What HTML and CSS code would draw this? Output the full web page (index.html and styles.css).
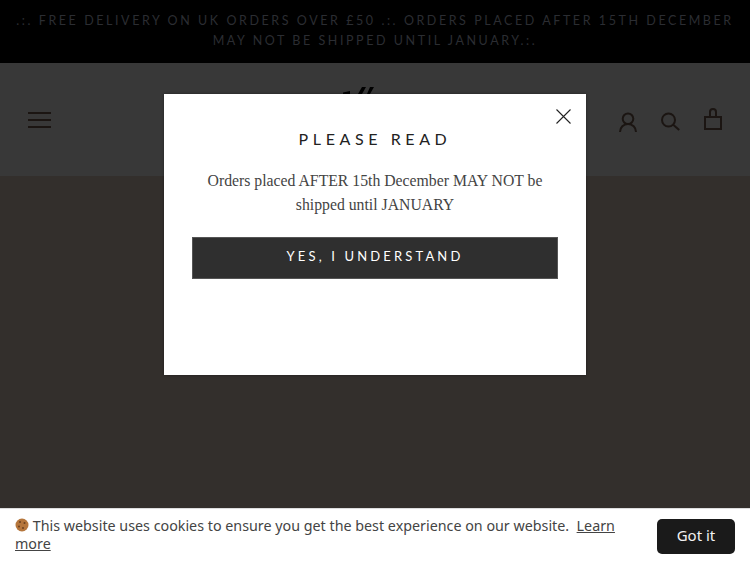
FILE: index.html
```html
<!DOCTYPE html>
<html>
<head>
    <title>Please read</title>
    <link rel="stylesheet" href="styles.css">
</head>
<body>
    <div class="announcement">.:. FREE DELIVERY ON UK ORDERS OVER £50 .:. ORDERS PLACED AFTER 15TH DECEMBER MAY NOT BE SHIPPED UNTIL JANUARY.:.</div>

    <header class="header">
        <svg width="24" height="18" viewBox="0 0 24 18" fill="none" stroke="#1b1512" stroke-width="2">
            <path d="M0 2h23M0 9h23M0 16h23"/>
        </svg>
        <svg class="logo" width="40" height="8" viewBox="0 0 40 8" fill="#000">
            <path d="M7 5.500l7-1.500v3H7zM22 7L26 0h4l-4 7zM31 7L34 0h4l-4 7z"/>
        </svg>
        <div class="header-icons">
            <svg width="18" height="24" viewBox="0 0 18 24" fill="none" stroke="#1b1512" stroke-width="2">
                <circle cx="9" cy="10.800" r="5.300"/>
                <path d="M1 24c0-4.500 3.500-8 8-8s8 3.500 8 8"/>
            </svg>
            <svg width="19" height="24" viewBox="0 0 19 24" fill="none" stroke="#1b1512" stroke-width="2">
                <circle cx="7.500" cy="12" r="6.500"/>
                <path d="M12.200 16.700l6 5.300"/>
            </svg>
            <svg width="18" height="24" viewBox="0 0 18 24" fill="none" stroke="#1b1512" stroke-width="2">
                <path d="M1 9h16v12H1zM6 9V4a3 3 0 0 1 6 0v5"/>
            </svg>
        </div>
    </header>

    <main class="hero">
        <div class="modal">
            <svg class="modal-close" width="15" height="15" viewBox="0 0 15 15" fill="none" stroke="#222" stroke-width="1.100">
                <path d="M.5.500l14 14M14.500.500l-14 14"/>
            </svg>
            <h2 class="modal-title">PLEASE READ</h2>
            <p class="modal-text">Orders placed AFTER 15th December MAY NOT be shipped until JANUARY</p>
            <button type="button" class="modal-button">YES, I UNDERSTAND</button>
        </div>
    </main>

    <div class="cookie-bar">
        <p class="cookie-text">
            <svg class="cookie-icon" width="14" height="14" viewBox="0 0 14 14">
                <circle cx="7" cy="7" r="6.500" fill="#b5763c"/>
                <circle cx="5" cy="4" r="1" fill="#6b4020"/>
                <circle cx="9.500" cy="5" r="1" fill="#6b4020"/>
                <circle cx="4" cy="8.500" r="1" fill="#6b4020"/>
                <circle cx="8" cy="10" r="1" fill="#6b4020"/>
            </svg>
            This website uses cookies to ensure you get the best experience on our website.&nbsp; <a href="#">Learn more</a>
        </p>
        <button type="button" class="cookie-button">Got it</button>
    </div>
</body>
</html>
```

FILE: styles.css
```css
html, body {
    height: 100%;
}
body {
    display: flex;
    flex-direction: column;
    height: 563px;
    margin: 0;
    overflow: hidden;
    background-color: #332f2c;
    font-family: "Liberation Serif", serif;
}
.announcement {
    box-sizing: border-box;
    height: 63px;
    padding: 11px 8px 0;
    background-color: #000;
    color: #2b2d32;
    font-family: Lato, sans-serif;
    font-size: 12.500px;
    line-height: 20px;
    letter-spacing: 2.570px;
    text-align: center;
}
.header {
    display: flex;
    align-items: center;
    justify-content: space-between;
    box-sizing: border-box;
    height: 113px;
    padding: 1px 28px 0;
    background-color: #383838;
    position: relative;
}
.logo {
    position: absolute;
    left: 336px;
    top: 24px;
}
.header-icons {
    display: flex;
    align-items: center;
    gap: 24px;
}
.hero {
    flex: 1;
    position: relative;
}
.modal {
    position: absolute;
    left: 164px;
    top: -82px;
    box-sizing: border-box;
    width: 422px;
    height: 281px;
    padding: 34px 28px 0;
    background-color: #fff;
    box-shadow: 0 0 3px rgba(0, 0, 0, 0.4);
    text-align: center;
}
.modal-close {
    position: absolute;
    top: 15px;
    right: 15px;
}
.modal-title {
    margin: 0;
    color: #222;
    font-family: Lato, sans-serif;
    font-size: 16px;
    font-weight: normal;
    line-height: 22px;
    letter-spacing: 4.600px;
}
.modal-text {
    margin: 19px 0 0;
    color: #444;
    font-size: 15.750px;
    line-height: 24px;
}
.modal-button {
    display: block;
    width: 366px;
    height: 42px;
    margin-top: 20px;
    padding-bottom: 5px;
    border: 1px solid #555;
    background-color: #2f2f2f;
    color: #fff;
    font-family: Lato, sans-serif;
    font-size: 13px;
    letter-spacing: 3.150px;
}
.cookie-bar {
    display: flex;
    align-items: center;
    justify-content: space-between;
    gap: 30px;
    box-sizing: border-box;
    height: 55px;
    padding: 0 15px;
    background-color: #fff;
    border-top: 1px solid #ddd;
    font-family: "Noto Sans", sans-serif;
}
.cookie-text {
    margin: 0 0 2px;
    color: #444;
    font-size: 14.300px;
    line-height: 18px;
}
.cookie-text a {
    color: #444;
}
.cookie-icon {
    vertical-align: -1px;
}
.cookie-button {
    flex: none;
    width: 78px;
    height: 35px;
    padding-bottom: 3px;
    border: none;
    border-radius: 5px;
    background-color: #1a1a1a;
    color: #f2f2f2;
    font-family: "Noto Sans", sans-serif;
    font-size: 15px;
}
```
